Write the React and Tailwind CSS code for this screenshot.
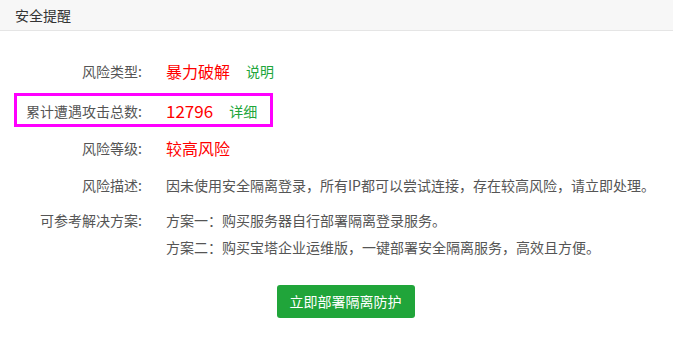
export default function App() {
  const font = { fontFamily: '"Noto Sans CJK SC", "Noto Sans", sans-serif' };

  return (
    <div className="w-[673px] h-[340px] bg-white overflow-hidden" style={font}>
      <div className="h-[31px] bg-[#f7f7f7] border-b border-[#e5e5e5] pl-[15px] flex items-center text-[14px] text-[#333]">
        安全提醒
      </div>

      <div className="pt-[28px] flex flex-col text-[14px] text-[#555]">
        <div className="flex items-center h-6">
          <div className="w-[142px] text-right">风险类型:</div>
          <div className="ml-6 text-[16px] text-[#ff0000]">暴力破解</div>
          <a className="ml-4 text-[14px] text-[#20a53a] cursor-pointer">说明</a>
        </div>

        <div className="relative flex items-center h-6 mt-4">
          <div className="absolute left-[14px] top-[-6px] w-[259px] h-[34px] border-[3px] border-[#ff00ff]" />
          <div className="w-[142px] text-right">累计遭遇攻击总数:</div>
          <div className="ml-6 text-[17px] text-[#ff0000]">12796</div>
          <a className="ml-4 text-[14px] text-[#20a53a] cursor-pointer">详细</a>
        </div>

        <div className="flex items-center h-6 mt-[13px]">
          <div className="w-[142px] text-right">风险等级:</div>
          <div className="ml-6 text-[16px] text-[#ff0000]">较高风险</div>
        </div>

        <div className="flex items-center h-6 mt-[13px]">
          <div className="w-[142px] text-right">风险描述:</div>
          <div className="ml-6">因未使用安全隔离登录，所有IP都可以尝试连接，存在较高风险，请立即处理。</div>
        </div>

        <div className="flex mt-[11px]">
          <div className="w-[142px] text-right h-6 leading-6">可参考解决方案:</div>
          <div className="ml-6 flex flex-col gap-[3px]">
            <div className="h-6 leading-6">方案一：购买服务器自行部署隔离登录服务。</div>
            <div className="h-6 leading-6">方案二：购买宝塔企业运维版，一键部署安全隔离服务，高效且方便。</div>
          </div>
        </div>

        <div className="flex justify-center mt-[26px]">
          <button className="ml-[18px] h-[33px] px-[13px] rounded-[3px] bg-[#20a53a] text-white text-[14px]">
            立即部署隔离防护
          </button>
        </div>
      </div>
    </div>
  );
}
